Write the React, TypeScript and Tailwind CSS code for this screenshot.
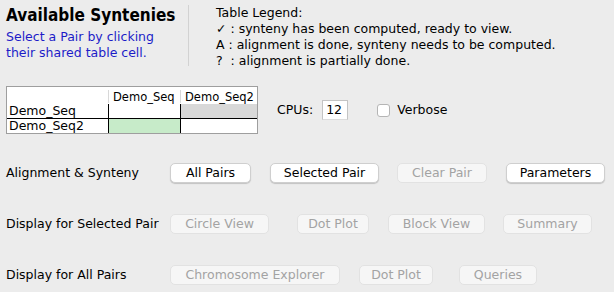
import React from 'react';

const font = { fontFamily: '"Lucida Grande", "DejaVu Sans", sans-serif' };

type Btn = { label: string; w: string; ml: string; disabled?: boolean };

function Button({ label, w, ml, disabled }: Btn) {
  return (
    <button
      className={`${w} ${ml} h-[20px] rounded-[5px] text-[12.5px] leading-none flex items-center justify-center ${
        disabled
          ? 'bg-[#f6f6f6] text-[#a3a3a3] border border-[#e2e2e2]'
          : 'bg-white text-black border border-[#cfcfcf] shadow-[0_1px_1px_rgba(0,0,0,0.18)]'
      }`}
    >
      {label}
    </button>
  );
}

export default function App() {
  const rows: { title: string; buttons: Btn[] }[] = [
    {
      title: 'Alignment & Synteny',
      buttons: [
        { label: 'All Pairs', w: 'w-[81px]', ml: 'ml-0' },
        { label: 'Selected Pair', w: 'w-[109px]', ml: 'ml-[19px]' },
        { label: 'Clear Pair', w: 'w-[90px]', ml: 'ml-[18px]', disabled: true },
        { label: 'Parameters', w: 'w-[99px]', ml: 'ml-[19px]' }
      ]
    },
    {
      title: 'Display for Selected Pair',
      buttons: [
        { label: 'Circle View', w: 'w-[99px]', ml: 'ml-0', disabled: true },
        { label: 'Dot Plot', w: 'w-[72px]', ml: 'ml-[28px]', disabled: true },
        { label: 'Block View', w: 'w-[97px]', ml: 'ml-[19px]', disabled: true },
        { label: 'Summary', w: 'w-[89px]', ml: 'ml-[18px]', disabled: true }
      ]
    },
    {
      title: 'Display for All Pairs',
      buttons: [
        { label: 'Chromosome Explorer', w: 'w-[170px]', ml: 'ml-0', disabled: true },
        { label: 'Dot Plot', w: 'w-[74px]', ml: 'ml-[19px]', disabled: true },
        { label: 'Queries', w: 'w-[78px]', ml: 'ml-[26px]', disabled: true }
      ]
    }
  ];

  return (
    <div className="w-[614px] h-[292px] bg-[#ececec] text-black overflow-hidden flex flex-col" style={font}>
      {/* header */}
      <div className="flex pt-[5px]">
        <div className="w-[182px] shrink-0 pl-[6px]">
          <div
            className="text-[17px] font-bold leading-[20px] whitespace-nowrap"
            style={{ fontFamily: '"DejaVu Sans Condensed", "DejaVu Sans", sans-serif' }}
          >
            Available Syntenies
          </div>
          <div className="mt-[4px] text-[12.5px] leading-[16px] text-[#1c1cc8] whitespace-nowrap">
            Select a Pair by clicking
            <br />
            their shared table cell.
          </div>
        </div>
        <div className="w-px h-[61px] bg-[#d2d2d2] ml-[6px]" />
        <div className="ml-[27px] text-[12.5px] leading-[16px] whitespace-nowrap">
          <div>Table Legend:</div>
          <div>✓ : synteny has been computed, ready to view.</div>
          <div>A : alignment is done, synteny needs to be computed.</div>
          <div>?&nbsp; : alignment is partially done.</div>
        </div>
      </div>

      {/* table + cpus */}
      <div className="flex items-center mt-[17px] pl-[6px]">
        <div className="w-[252px] h-[48px] border border-[#9e9e9e] bg-white flex flex-col">
          <div className="h-[17px] flex items-end text-[11.5px] leading-[14px]">
            <div className="w-[101px]" />
            <div className="w-[72px] h-[13px] border-l border-[#d8d8d8] pl-[4px] mb-[1px] flex items-center">Demo_Seq</div>
            <div className="flex-1 h-[13px] border-l border-[#d8d8d8] pl-[4px] mb-[1px] flex items-center">Demo_Seq2</div>
          </div>
          <div className="h-[15px] flex text-[12.5px] leading-[14px] border-b border-black">
            <div className="w-[101px] pl-[2px] flex items-end">Demo_Seq</div>
            <div className="w-[72px] border-l border-black" />
            <div className="flex-1 border-l border-black bg-[#d8d8d8]" />
          </div>
          <div className="flex-1 flex text-[12.5px] leading-[14px]">
            <div className="w-[101px] pl-[2px] flex items-center">Demo_Seq2</div>
            <div className="w-[72px] border-l border-black bg-[#c7ebc9]" />
            <div className="flex-1 border-l border-black" />
          </div>
        </div>
        <span className="ml-[19px] text-[12.5px]">CPUs:</span>
        <div className="ml-[9px] w-[26px] h-[20px] bg-white border border-[#c4c4c4] border-b-[#dcdcdc] text-[12.5px] leading-[18px] pl-[3px]">
          12
        </div>
        <div className="ml-[29px] w-[13px] h-[13px] bg-white border border-[#b5b5b5] rounded-[3px]" />
        <span className="ml-[7px] text-[12.5px]">Verbose</span>
      </div>

      {/* button rows */}
      <div className="flex flex-col gap-[31px] mt-[29px] pl-[6px]">
        {rows.map((row) => (
          <div key={row.title} className="flex items-center h-[20px]">
            <div className="w-[164px] text-[12.5px] whitespace-nowrap">{row.title}</div>
            {row.buttons.map((b, i) => (
              <Button key={i} {...b} />
            ))}
          </div>
        ))}
      </div>
    </div>
  );
}
